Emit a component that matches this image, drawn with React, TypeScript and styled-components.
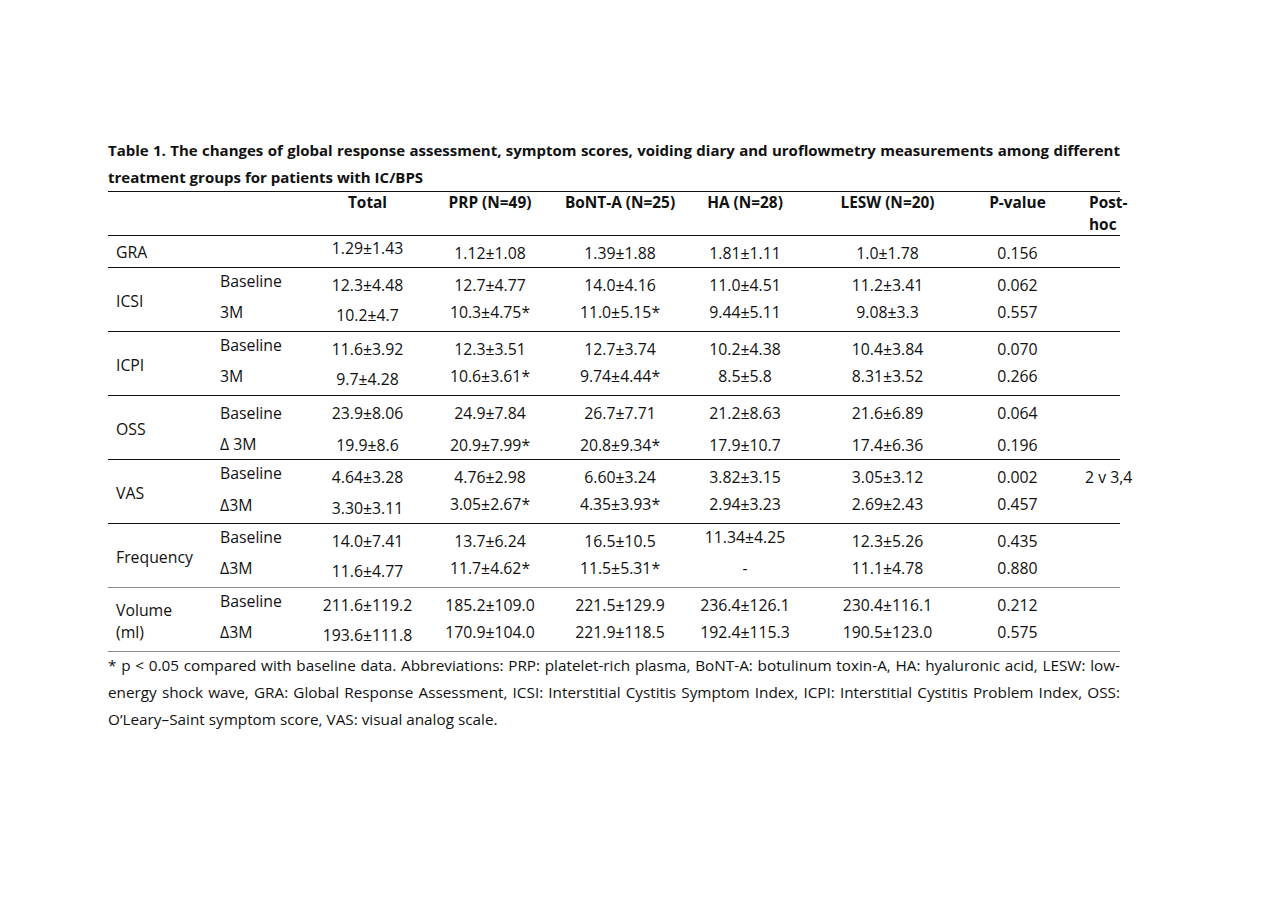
import styled, { createGlobalStyle } from "styled-components";

const GlobalStyle = createGlobalStyle`
  body {
    margin: 0;
    background: #fff;
    color: #111;
    font-family: "Open Sans", "Liberation Sans", sans-serif;
  }
`

const COLS = "102px 95px 125px 120px 140px 110px 175px 85px 60px";

const Page = styled.div`
  padding: 137px 0 0 108px;
  width: 1012px;
  font-size: 15.8px;
`

const Line = styled.div<{ $justify?: boolean; $bold?: boolean }>`
  line-height: 27px;
  white-space: nowrap;
  font-weight: ${p => (p.$bold ? 700 : 400)};
  font-size: ${p => (p.$bold ? "15px" : "15.3px")};
  text-align: ${p => (p.$justify ? "justify" : "left")};
  text-align-last: ${p => (p.$justify ? "justify" : "left")};
`

const HeaderRow = styled.div`
  display: grid;
  grid-template-columns: ${COLS};
  height: 45px;
  box-sizing: border-box;
  border-top: 1px solid #111;
  border-bottom: 1px solid #111;
  font-weight: 700;
  font-size: 15.4px;
  line-height: 22px;
`

const SingleRow = styled.div`
  display: grid;
  grid-template-columns: ${COLS};
  height: 32px;
  box-sizing: border-box;
  border-bottom: 1px solid #111;
`

const GroupRow = styled.div<{ $gray?: boolean }>`
  display: grid;
  grid-template-columns: ${COLS};
  grid-template-rows: 26px 27px;
  height: 64px;
  box-sizing: border-box;
  padding-top: 4px;
  border-bottom: 1px solid ${p => (p.$gray ? "#8a8a8a" : "#111")};
`

const Cell = styled.div<{ $align?: "left" | "center"; $pad?: number; $dy?: number; $span?: boolean }>`
  display: flex;
  align-items: center;
  justify-content: ${p => (p.$align === "left" ? "flex-start" : "center")};
  padding-left: ${p => p.$pad ?? 0}px;
  padding-top: ${p => Math.max(0, (p.$dy ?? 0) * 2)}px;
  padding-bottom: ${p => Math.max(0, -(p.$dy ?? 0) * 2)}px;
  white-space: nowrap;
  ${p => (p.$span ? "grid-row: 1 / 3;" : "")}
`

const HeadCell = styled.div<{ $align?: "left" | "center"; $pad?: number }>`
  text-align: ${p => p.$align ?? "center"};
  padding-left: ${p => p.$pad ?? 0}px;
  white-space: nowrap;
`

const LabelText = styled.div`
  line-height: 22px;
`

type Sub = { sub: string; vals: string[]; p: string; post?: string; subDy?: number; dys?: number[]; allDy?: number };
type Group = { label: string[]; gray?: boolean; rows: [Sub, Sub] };

const groups: Group[] = [
  {
    label: ["ICSI"],
    rows: [
      { sub: "Baseline", vals: ["12.3±4.48", "12.7±4.77", "14.0±4.16", "11.0±4.51", "11.2±3.41"], p: "0.062" },
      { sub: "3M", vals: ["10.2±4.7", "10.3±4.75*", "11.0±5.15*", "9.44±5.11", "9.08±3.3"], p: "0.557", subDy: 0, dys: [3] },
    ],
  },
  {
    label: ["ICPI"],
    rows: [
      { sub: "Baseline", vals: ["11.6±3.92", "12.3±3.51", "12.7±3.74", "10.2±4.38", "10.4±3.84"], p: "0.070" },
      { sub: "3M", vals: ["9.7±4.28", "10.6±3.61*", "9.74±4.44*", "8.5±5.8", "8.31±3.52"], p: "0.266", subDy: 0, dys: [3] },
    ],
  },
  {
    label: ["OSS"],
    rows: [
      { sub: "Baseline", vals: ["23.9±8.06", "24.9±7.84", "26.7±7.71", "21.2±8.63", "21.6±6.89"], p: "0.064", subDy: 0 },
      { sub: "Δ 3M", vals: ["19.9±8.6", "20.9±7.99*", "20.8±9.34*", "17.9±10.7", "17.4±6.36"], p: "0.196", subDy: 4, allDy: 5 },
    ],
  },
  {
    label: ["VAS"],
    rows: [
      { sub: "Baseline", vals: ["4.64±3.28", "4.76±2.98", "6.60±3.24", "3.82±3.15", "3.05±3.12"], p: "0.002", post: "2 v 3,4" },
      { sub: "Δ3M", vals: ["3.30±3.11", "3.05±2.67*", "4.35±3.93*", "2.94±3.23", "2.69±2.43"], p: "0.457", subDy: 1, dys: [4] },
    ],
  },
  {
    label: ["Frequency"],
    gray: true,
    rows: [
      { sub: "Baseline", vals: ["14.0±7.41", "13.7±6.24", "16.5±10.5", "11.34±4.25", "12.3±5.26"], p: "0.435", dys: [0, 0, 0, -4] },
      { sub: "Δ3M", vals: ["11.6±4.77", "11.7±4.62*", "11.5±5.31*", "-", "11.1±4.78"], p: "0.880", subDy: 0, dys: [3] },
    ],
  },
  {
    label: ["Volume", "(ml)"],
    gray: true,
    rows: [
      { sub: "Baseline", vals: ["211.6±119.2", "185.2±109.0", "221.5±129.9", "236.4±126.1", "230.4±116.1"], p: "0.212" },
      { sub: "Δ3M", vals: ["193.6±111.8", "170.9±104.0", "221.9±118.5", "192.4±115.3", "190.5±123.0"], p: "0.575", subDy: 0, dys: [3] },
    ],
  },
];

const GroupBlock = ({ g }: { g: Group }) => (
  <GroupRow $gray={g.gray}>
    <Cell $align="left" $pad={8} $span $dy={2}>
      <LabelText>
        {g.label.map(l => (
          <div key={l}>{l}</div>
        ))}
      </LabelText>
    </Cell>
    {g.rows.map((r, ri) => [
      <Cell key={`s${ri}`} $align="left" $pad={10} $dy={r.subDy ?? -4}>
        {r.sub}
      </Cell>,
      ...r.vals.map((v, vi) => (
        <Cell key={`v${ri}${vi}`} $dy={r.allDy ?? r.dys?.[vi] ?? 0}>
          {v}
        </Cell>
      )),
      <Cell key={`p${ri}`} $dy={r.allDy ?? 0}>
        {r.p}
      </Cell>,
      <Cell key={`h${ri}`} $align="left" $pad={25}>
        {r.post ?? ""}
      </Cell>,
    ])}
  </GroupRow>
);

export default function App() {
  return (
    <Page>
      <GlobalStyle />
      <Line $bold $justify>
        Table 1. The changes of global response assessment, symptom scores, voiding diary and uroflowmetry measurements among different
      </Line>
      <Line $bold>treatment groups for patients with IC/BPS</Line>

      <HeaderRow>
        <HeadCell />
        <HeadCell />
        <HeadCell>Total</HeadCell>
        <HeadCell>PRP (N=49)</HeadCell>
        <HeadCell>BoNT-A (N=25)</HeadCell>
        <HeadCell>HA (N=28)</HeadCell>
        <HeadCell>LESW (N=20)</HeadCell>
        <HeadCell>P-value</HeadCell>
        <HeadCell $align="left" $pad={29}>
          Post-
          <br />
          hoc
        </HeadCell>
      </HeaderRow>

      <SingleRow>
        <Cell $align="left" $pad={8}>GRA</Cell>
        <Cell />
        <Cell $dy={-4}>1.29±1.43</Cell>
        <Cell $dy={1}>1.12±1.08</Cell>
        <Cell $dy={1}>1.39±1.88</Cell>
        <Cell $dy={1}>1.81±1.11</Cell>
        <Cell $dy={1}>1.0±1.78</Cell>
        <Cell $dy={1}>0.156</Cell>
        <Cell />
      </SingleRow>

      {groups.map(g => (
        <GroupBlock key={g.label[0]} g={g} />
      ))}

      <Line $justify>
        * p &lt; 0.05 compared with baseline data. Abbreviations: PRP: platelet-rich plasma, BoNT-A: botulinum toxin-A, HA: hyaluronic acid, LESW: low-
      </Line>
      <Line $justify>
        energy shock wave, GRA: Global Response Assessment, ICSI: Interstitial Cystitis Symptom Index, ICPI: Interstitial Cystitis Problem Index, OSS:
      </Line>
      <Line>O’Leary–Saint symptom score, VAS: visual analog scale.</Line>
    </Page>
  );
}
